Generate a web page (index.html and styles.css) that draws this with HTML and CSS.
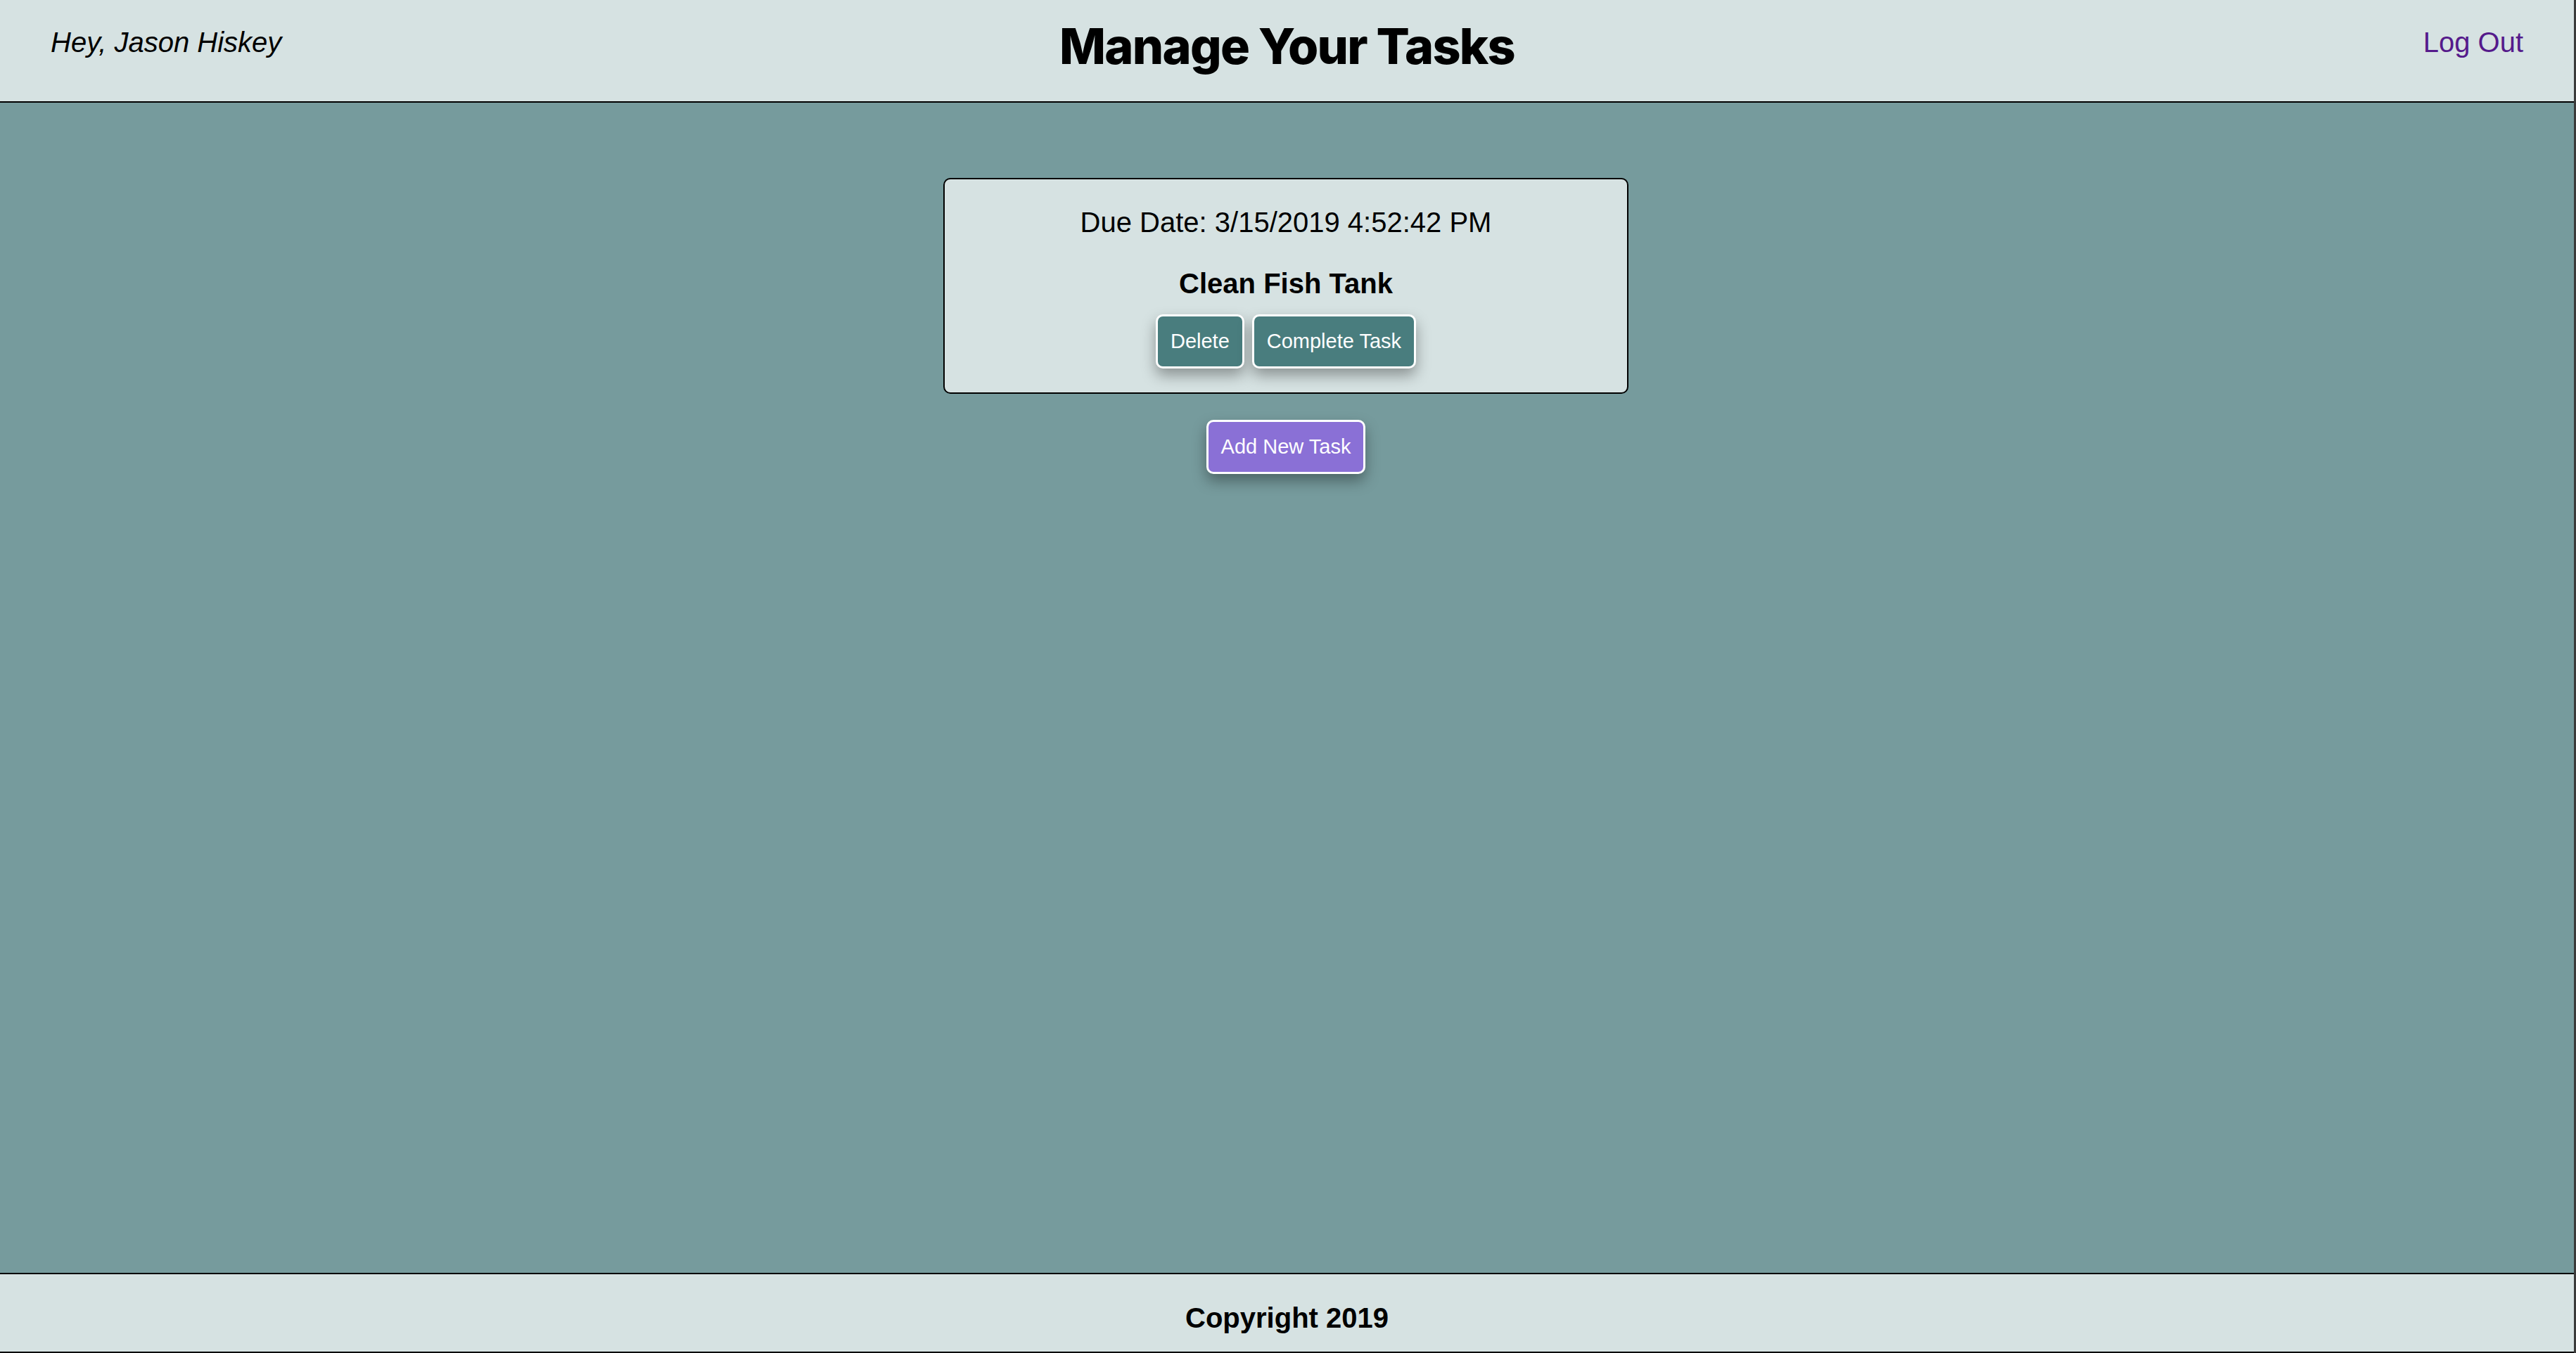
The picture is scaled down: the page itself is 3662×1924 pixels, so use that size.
FILE: index.html
```html
<!DOCTYPE html>
<html lang="en">
<head>
<meta charset="utf-8">
<title>Manage Your Tasks</title>
<link rel="stylesheet" href="styles.css">
</head>
<body>
<div class="page">
  <header class="topbar">
    <div class="greeting">Hey, Jason Hiskey</div>
    <h1 class="title">Manage Your Tasks</h1>
    <a class="logout" href="#">Log Out</a>
  </header>
  <main class="content">
    <section class="task-card">
      <p class="due">Due Date: 3/15/2019 4:52:42 PM</p>
      <h3 class="task-name">Clean Fish Tank</h3>
      <div class="actions">
        <button class="btn btn-teal">Delete</button>
        <button class="btn btn-teal">Complete Task</button>
      </div>
    </section>
    <button class="btn btn-purple add-btn">Add New Task</button>
  </main>
  <footer class="footer">Copyright 2019</footer>
</div>
</body>
</html>
```
FILE: styles.css
```css
html, body {
  margin: 0;
  padding: 0;
  height: 100%;
}
body {
  font-family: "Liberation Sans", Arial, sans-serif;
  background: #769b9d;
}
.page {
  min-height: 100vh;
  display: flex;
  flex-direction: column;
  border-right: 3px solid #3a3a3a;
  box-sizing: border-box;
}
.topbar {
  display: grid;
  grid-template-columns: 1fr auto 1fr;
  align-items: start;
  height: 144px;
  padding: 0 72px;
  background: #d6e2e2;
  border-bottom: 2px solid #000;
}
.greeting {
  padding-top: 37px;
  font-style: italic;
  font-size: 40px;
  line-height: 46px;
  color: #000;
}
.title {
  margin: 0;
  padding-top: 31px;
  font-family: Inter, "Liberation Sans", sans-serif;
  font-weight: 800;
  font-size: 70px;
  line-height: 1;
  letter-spacing: -1.75px;
  color: #000;
}
.logout {
  justify-self: end;
  padding-top: 37px;
  font-size: 40px;
  line-height: 46px;
  color: #551a8b;
  text-decoration: none;
}
.content {
  flex: 1;
  display: flex;
  flex-direction: column;
  align-items: center;
  padding-top: 107px;
  padding-right: 3px;
}
.task-card {
  width: 974px;
  box-sizing: border-box;
  background: #d6e2e2;
  border: 2px solid #000;
  border-radius: 10px;
  padding: 38px 0 34px;
  text-align: center;
}
.due {
  margin: 0 0 41px;
  font-size: 40px;
  line-height: 46px;
  color: #000;
}
.task-name {
  margin: 0 0 21px;
  font-size: 40px;
  line-height: 46px;
  font-weight: bold;
  color: #000;
}
.actions {
  display: flex;
  justify-content: center;
  gap: 11px;
}
.btn {
  font-family: "Liberation Sans", Arial, sans-serif;
  font-size: 29px;
  line-height: 33px;
  padding: 19px 18px;
  color: #fff;
  border: 3px solid #fff;
  border-radius: 10px;
  box-shadow: 0 10px 20px rgba(0, 0, 0, 0.35);
  cursor: pointer;
}
.btn-teal {
  background: #497d7e;
}
.btn-purple {
  background: #8a70d6;
}
.add-btn {
  margin-top: 37px;
}
.footer {
  background: #d6e2e2;
  border-top: 2px solid #000;
  border-bottom: 2px solid #000;
  padding: 39px 0 25px;
  text-align: center;
  font-weight: bold;
  font-size: 40px;
  line-height: 46px;
  color: #000;
}
```
